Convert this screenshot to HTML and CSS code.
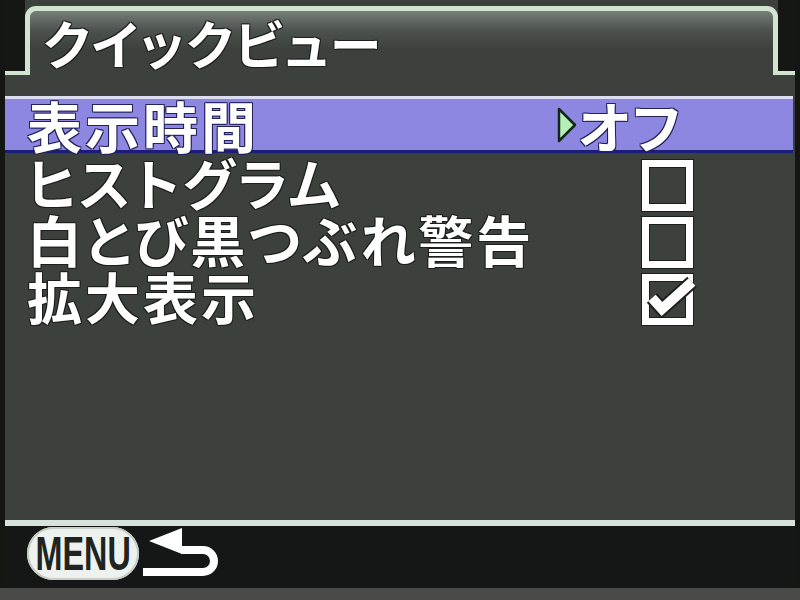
FILE: index.html
```html
<!DOCTYPE html>
<html lang="ja">
  <head>
    <meta charset="utf-8">
    <title>クイックビュー</title>
    <link rel="stylesheet" href="styles.css">
  </head>
  <body>
    <div class="screen">
      <div class="header">
        <div class="tab-row">
          <div class="shoulder shoulder-left"></div>
          <div class="tab"><h1 class="title">クイックビュー</h1></div>
          <div class="shoulder shoulder-right"></div>
        </div>
        <div class="header-gap"></div>
      </div>

      <div class="menu">
        <div class="row selected">
          <span class="label">表示時間</span>
          <span class="value">
            <svg class="cursor" width="20" height="36" viewBox="0 0 20 36">
              <polygon points="2,2 18,18 2,34" fill="#b6efb6" stroke="#10281a" stroke-width="2.5" stroke-linejoin="round"/>
            </svg>
            <span class="value-text">オフ</span>
          </span>
        </div>
        <div class="row">
          <span class="label">ヒストグラム</span>
          <span class="value"><span class="box"></span></span>
        </div>
        <div class="row">
          <span class="label">白とび黒つぶれ警告</span>
          <span class="value"><span class="box"></span></span>
        </div>
        <div class="row">
          <span class="label">拡大表示</span>
          <span class="value">
            <span class="box">
              <svg class="tick" width="62" height="44" viewBox="0 0 62 44">
                <path d="M10 24 L20 35 L50 8" fill="none" stroke="#1c211e" stroke-width="14"/>
                <path d="M10 24 L20 35 L50 8" fill="none" stroke="#ffffff" stroke-width="10"/>
              </svg>
            </span>
          </span>
        </div>
      </div>

      <div class="footer">
        <span class="menu-btn"><span class="menu-word">MENU</span></span>
        <svg class="back" width="80" height="54" viewBox="0 0 80 54">
          <polygon points="8,15 41,2 41,28" fill="#ffffff"/>
          <path d="M40 24 H62 A11 11 0 0 1 62 46 H2" fill="none" stroke="#ffffff" stroke-width="8"/>
        </svg>
      </div>
    </div>
    <div class="bezel"></div>
  </body>
</html>
```

FILE: styles.css
```css
html, body {
  margin: 0;
  padding: 0;
}
body {
  width: 800px;
  height: 600px;
  background-color: #141614;
  display: flex;
  flex-direction: column;
  font-family: "Noto Sans CJK JP", "Noto Sans", sans-serif;
  color: #ffffff;
  overflow: hidden;
}
.screen {
  height: 588px;
  margin: 0 5px;
  display: flex;
  flex-direction: column;
  background-color: #3c413e;
}

/* title tab with the stepped frame line */
.header {
  display: flex;
  flex-direction: column;
  height: 96px;
}
.tab-row {
  display: flex;
  height: 75px;
}
.shoulder {
  background-color: #151715;
  border-bottom: 4px solid #d3e3d2;
  box-sizing: border-box;
}
.shoulder-left {
  width: 20px;
}
.shoulder-right {
  width: 17px;
}
.tab {
  flex: 1;
  margin-top: 6px;
  border: 5px solid #d3e3d2;
  border-bottom: none;
  border-radius: 11px 11px 0 0;
  background: linear-gradient(#777e77, #4c524e 30%, #3c413e 60%);
  padding-left: 13px;
}
.header-gap {
  flex: 1;
}
.title {
  margin: 0;
  padding-top: 3px;
  font-size: 52px;
  line-height: 58px;
  font-weight: bold;
  font-feature-settings: "palt";
  letter-spacing: 2px;
  text-shadow: 1px 1px 0 #1b1e1c, -1px -1px 0 #1b1e1c, 1px -1px 0 #1b1e1c, -1px 1px 0 #1b1e1c;
}

/* menu rows */
.menu {
  flex: 1;
}
.row {
  display: flex;
  height: 57px;
  box-sizing: border-box;
  border-top: 3px solid transparent;
  border-bottom: 3px solid transparent;
  align-items: center;
}
.row.selected {
  background-color: #8d87e2;
  border-top-color: #dcdcf2;
  border-bottom-color: #1c1d78;
  margin-right: 2px;
}
.label {
  flex: 1;
  padding-left: 22px;
  font-size: 55px;
  line-height: 51px;
  font-weight: bold;
  font-feature-settings: "palt";
  letter-spacing: 3px;
  white-space: nowrap;
  text-shadow: 1px 1px 0 #1b1e1c, -1px -1px 0 #1b1e1c, 1px -1px 0 #1b1e1c, -1px 1px 0 #1b1e1c;
}
.selected .label,
.selected .value-text {
  text-shadow: 1px 1px 0 #22225a, -1px -1px 0 #22225a, 1px -1px 0 #22225a, -1px 1px 0 #22225a;
}
.value {
  width: 237px;
  display: flex;
  align-items: center;
  height: 100%;
}
.cursor {
  margin-left: 1px;
}
.value-text {
  margin-left: 1px;
  font-size: 55px;
  line-height: 51px;
  font-weight: bold;
  font-feature-settings: "palt";
  letter-spacing: 2px;
}
.box {
  position: relative;
  margin-left: 84px;
  margin-top: 8px;
  width: 51px;
  height: 51px;
  box-sizing: border-box;
  border: 7px solid #ffffff;
  box-shadow: 0 0 0 1px #1b1e1c, inset 0 0 0 1px #1b1e1c;
}
.tick {
  position: absolute;
  left: -7px;
  top: -7px;
}

/* footer with MENU button */
.footer {
  height: 68px;
  box-sizing: border-box;
  border-top: 6px solid #d6e2da;
  background-color: #141715;
  display: flex;
  align-items: flex-start;
  padding-left: 22px;
}
.menu-btn {
  margin-top: 1px;
  width: 112px;
  height: 53px;
  border-radius: 27px;
  background-color: #eef2ee;
  box-shadow: inset 0 0 0 2px #c6cdc6;
  display: flex;
  align-items: center;
  justify-content: center;
  overflow: hidden;
}
.menu-word {
  display: inline-block;
  font-family: "Liberation Sans", sans-serif;
  font-weight: bold;
  font-size: 49px;
  line-height: 49px;
  color: #1f2421;
  transform: scaleX(0.66);
}
.back {
  margin-left: 2px;
}
.bezel {
  flex: 1;
  background-color: #4a4a49;
}
```
